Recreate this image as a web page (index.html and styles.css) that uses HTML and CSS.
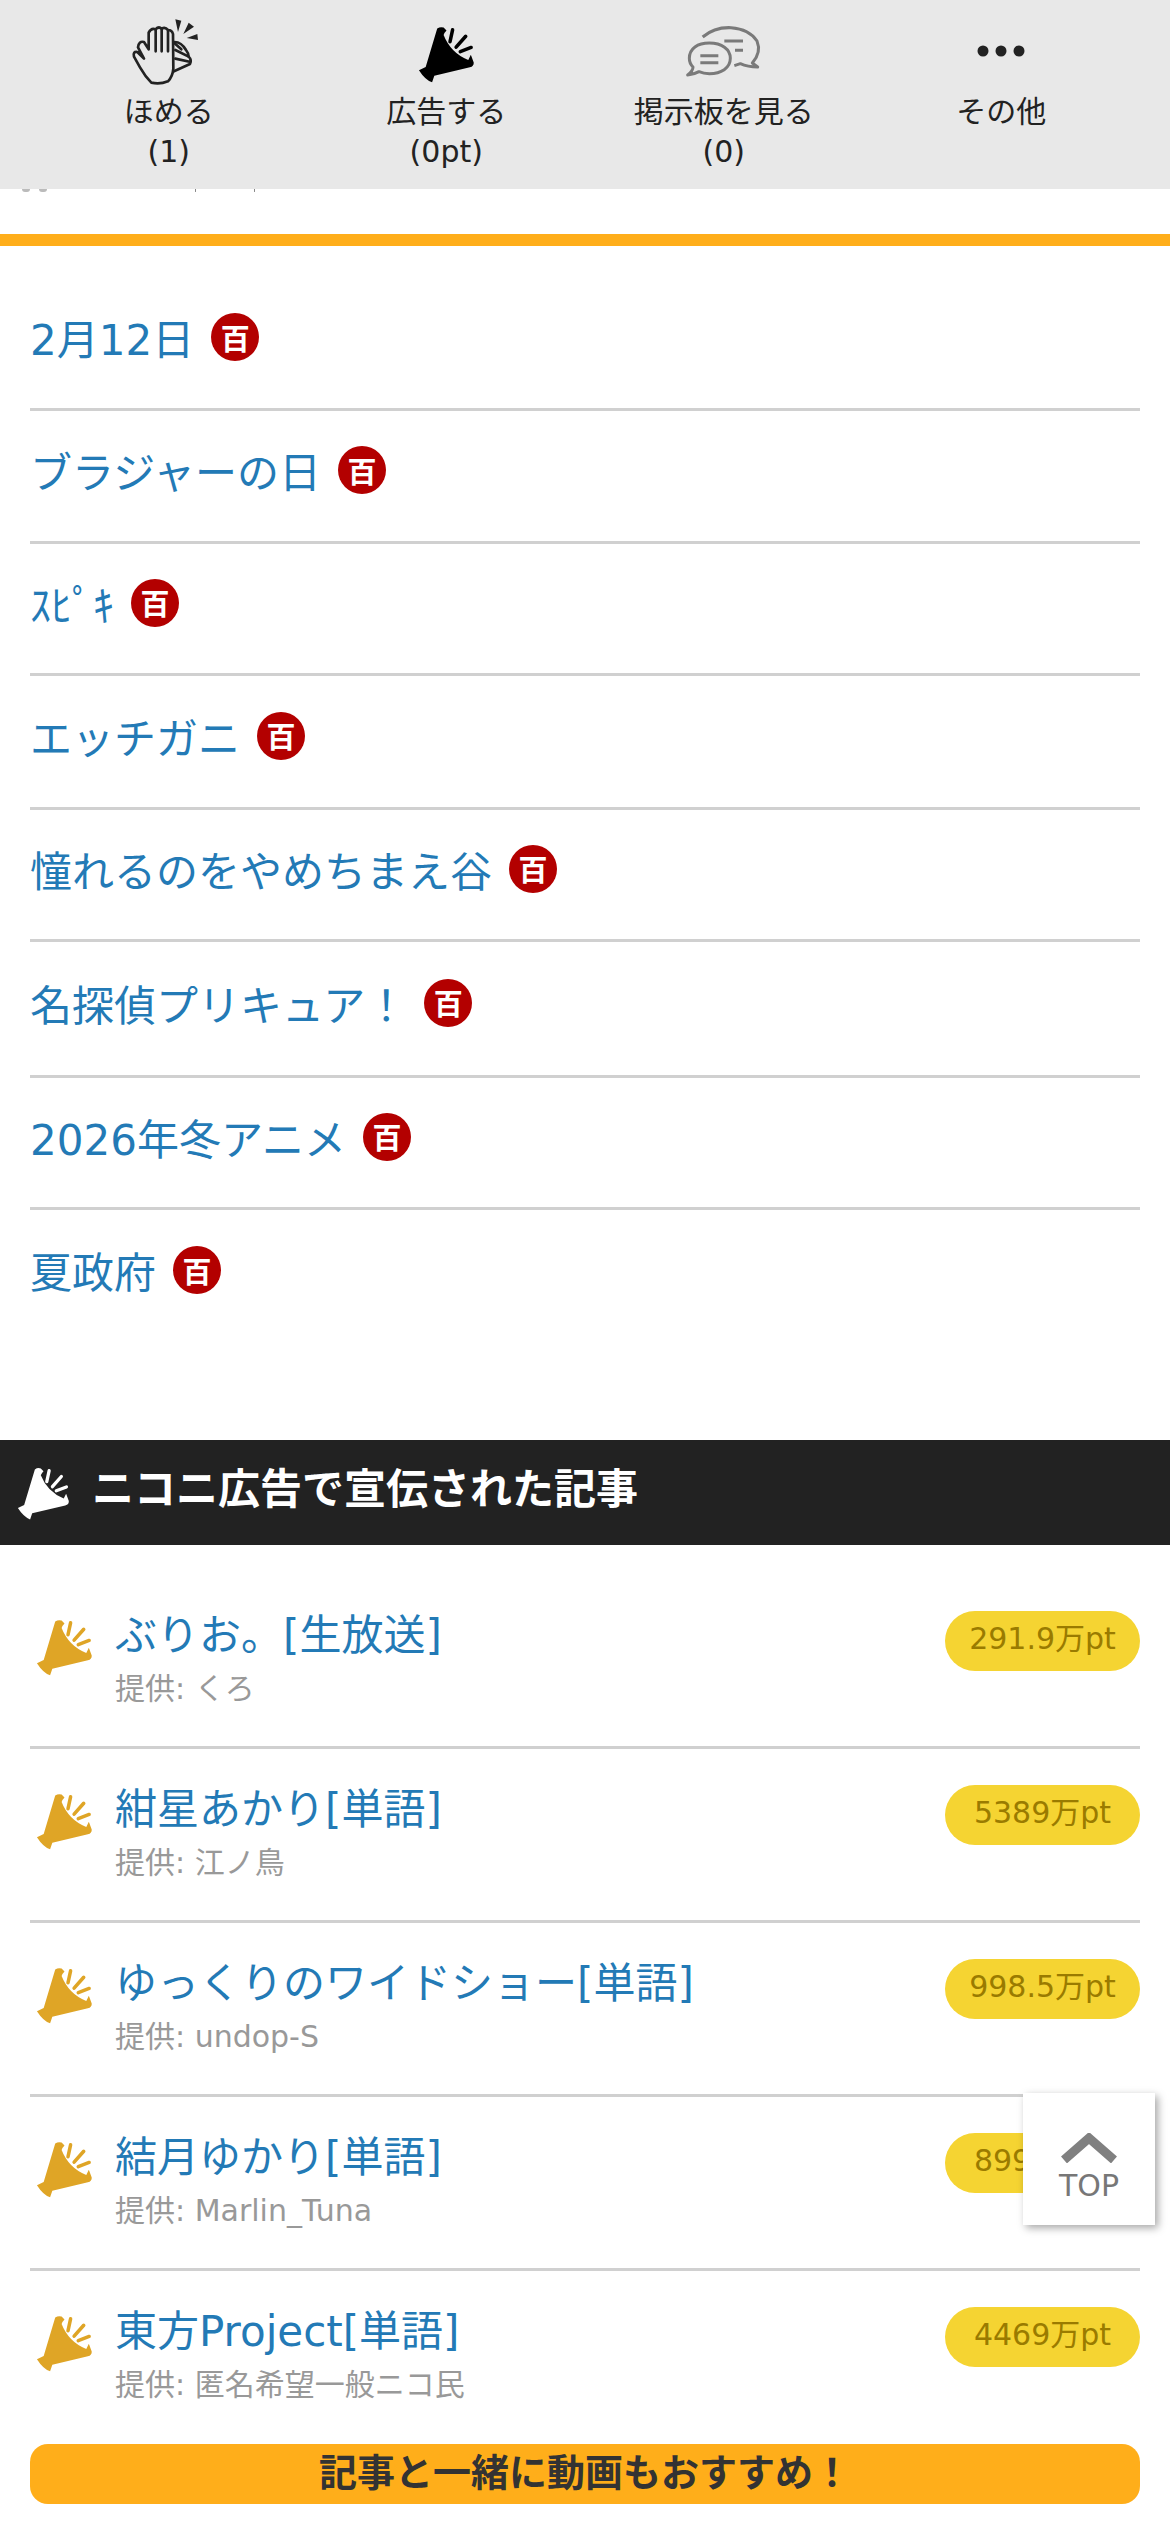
FILE: index.html
```html
<!DOCTYPE html>
<html lang="ja">
<head>
<meta charset="utf-8">
<title>ニコニ広告</title>
<link rel="stylesheet" href="styles.css">
</head>
<body>
<svg class="defs" width="0" height="0" aria-hidden="true">
  <symbol id="horn" viewBox="48 44 178 178">
    <path fill="currentColor" d="M108 52 Q118 45 128 49 L137 58 Q130 65 128 72 Q150 128 205 150 L213 134 L222 158 Q223 170 210 173 L99 199 L92 220 Q70 212 51 182 L72 172 Z"/>
    <path fill="none" stroke="currentColor" stroke-width="11" stroke-linecap="round" d="M156 56 L148 93 M197 76 L167 110 M214 111 L180 124"/>
  </symbol>
</svg>

<header class="toolbar">
  <div class="tool">
    <svg class="tool-icon" viewBox="3 0 300 240">
      <g fill="none" stroke="#222" stroke-width="8" stroke-linecap="round" stroke-linejoin="round">
        <path d="M168 98 L190 118 M172 120 L212 140 M172 146 L218 156 M168 184 L216 162 Q222 150 212 140"/>
        <path d="M170 96 Q190 96 204 120 Q212 130 212 140"/>
        <path d="M100 218 Q82 200 66 172 L48 140 Q44 124 58 126 L78 146 L60 112 Q62 92 78 96 L92 118 L92 68 Q100 52 113 58 Q122 48 131 56 Q142 50 150 60 Q162 60 165 72 L166 176 Q164 200 150 214 Q125 224 100 218 Z"/>
        <path d="M113 58 L113 124 M131 56 L131 124 M150 60 L150 124"/>
      </g>
      <path fill="#222" d="M172 28 L190 32 L180 66 Z M212 38 L228 50 L196 72 Z M238 72 L240 90 L206 84 Z"/>
    </svg>
    <div class="tool-label">ほめる<br>(1)</div>
  </div>
  <div class="tool">
    <svg class="tool-icon tool-horn" viewBox="0 0 100 80"><use href="#horn" x="22" y="16" width="57" height="57"/></svg>
    <div class="tool-label">広告する<br>(0pt)</div>
  </div>
  <div class="tool">
    <svg class="tool-icon" viewBox="-21 -15 300 240">
      <g fill="none" stroke="#7a7a7a" stroke-width="9" stroke-linejoin="round">
        <path d="M65 66 Q100 36 150 38 Q205 42 228 78 Q242 112 214 144 L230 156 Q200 156 178 146 L160 152"/>
        <path d="M25 130 C25 100 50 84 85 84 C122 84 148 102 148 130 C148 160 120 176 85 176 Q68 176 54 170 Q40 178 20 180 Q36 168 36 156 Q25 146 25 130 Z"/>
        <path d="M58 122 H112 M58 143 H112 M130 78 H186 M162 106 H186"/>
      </g>
    </svg>
    <div class="tool-label">掲示板を見る<br>(0)</div>
  </div>
  <div class="tool">
    <svg class="tool-icon" viewBox="0 0 100 80">
      <g fill="#222"><circle cx="32" cy="41" r="5.5"/><circle cx="50" cy="41" r="5.5"/><circle cx="68" cy="41" r="5.5"/></g>
    </svg>
    <div class="tool-label">その他</div>
  </div>
</header>

<div class="scroll-rest" aria-hidden="true"><i class="mark mark-a"></i><i class="mark mark-b"></i><i class="mark mark-c"></i><i class="mark mark-d"></i></div>

<section class="words">
  <div class="word word-m"><a class="word-link">2月12日</a><span class="dic">百</span></div>
  <div class="word word-m"><a class="word-link">ブラジャーの日</a><span class="dic">百</span></div>
  <div class="word"><a class="word-link">ｽﾋﾟｷ</a><span class="dic">百</span></div>
  <div class="word word-tall"><a class="word-link">エッチガニ</a><span class="dic">百</span></div>
  <div class="word"><a class="word-link">憧れるのをやめちまえ谷</a><span class="dic">百</span></div>
  <div class="word word-taller"><a class="word-link">名探偵プリキュア！</a><span class="dic">百</span></div>
  <div class="word"><a class="word-link">2026年冬アニメ</a><span class="dic">百</span></div>
  <div class="word word-last"><a class="word-link">夏政府</a><span class="dic">百</span></div>
</section>

<h2 class="ad-head">
  <svg class="ad-head-icon"><use href="#horn"/></svg>
  <span class="ad-head-text">ニコニ広告で宣伝された記事</span>
</h2>

<section class="ads">
  <div class="ad">
    <svg class="ad-icon"><use href="#horn"/></svg>
    <div class="ad-body"><a class="ad-title">ぶりお。[生放送]</a><div class="ad-by">提供: くろ</div></div>
    <div class="pill">291.9万pt</div>
  </div>
  <div class="ad">
    <svg class="ad-icon"><use href="#horn"/></svg>
    <div class="ad-body"><a class="ad-title">紺星あかり[単語]</a><div class="ad-by">提供: 江ノ鳥</div></div>
    <div class="pill">5389万pt</div>
  </div>
  <div class="ad">
    <svg class="ad-icon"><use href="#horn"/></svg>
    <div class="ad-body"><a class="ad-title">ゆっくりのワイドショー[単語]</a><div class="ad-by">提供: undop-S</div></div>
    <div class="pill">998.5万pt</div>
  </div>
  <div class="ad">
    <svg class="ad-icon"><use href="#horn"/></svg>
    <div class="ad-body"><a class="ad-title">結月ゆかり[単語]</a><div class="ad-by">提供: Marlin_Tuna</div></div>
    <div class="pill">8990万pt</div>
  </div>
  <div class="ad ad-last">
    <svg class="ad-icon"><use href="#horn"/></svg>
    <div class="ad-body"><a class="ad-title">東方Project[単語]</a><div class="ad-by">提供: 匿名希望一般ニコ民</div></div>
    <div class="pill">4469万pt</div>
  </div>
  <div class="banner">記事と一緒に動画もおすすめ！</div>
</section>

<a class="to-top">
  <svg class="to-top-icon" viewBox="0 0 56 30"><path d="M3 27 L28 5 L53 27" fill="none" stroke="#808080" stroke-width="9"/></svg>
  <span>TOP</span>
</a>
</body>
</html>
```

FILE: styles.css
```css
* { box-sizing: border-box; }
html, body { margin: 0; padding: 0; }
body {
  position: relative;
  height: 2532px;
  overflow: hidden;
  background: #fff;
  font-family: "DejaVu Sans", "Noto Sans CJK JP", sans-serif;
  color: #222;
}
.defs { position: absolute; }

.toolbar {
  display: flex;
  height: 189px;
  padding: 0 30px;
  background: #e8e8e8;
}
.tool {
  flex: 1 1 0;
  padding-top: 10px;
  text-align: center;
}
.tool-icon {
  display: block;
  width: 100px;
  height: 80px;
  margin: 0 auto;
}
.tool-horn { color: #000; }
.tool-label {
  margin-top: 2px;
  font-size: 30px;
  line-height: 40px;
  color: #222;
}

.scroll-rest {
  display: flex;
  height: 45px;
  position: relative;
}
.mark { display: block; height: 3px; background: #bbb; border-radius: 0 0 3px 3px; }
.mark-a { width: 8px; margin-left: 22px; }
.mark-b { width: 8px; margin-left: 9px; }
.mark-c { width: 1px; margin-left: 148px; background: #888; }
.mark-d { width: 1px; margin-left: 58px; background: #888; }

.words {
  border-top: 12px solid #ffae1a;
  padding: 32px 30px 0;
  height: 1206px;
}
.word {
  display: flex;
  align-items: center;
  gap: 17px;
  height: 132px;
  border-bottom: 3px solid #d0d0d0;
  padding-bottom: 4px;
}
.word-m { height: 133px; }
.word-tall { height: 134px; }
.word-taller { height: 136px; }
.word-last { border-bottom: 0; }
.word-link {
  font-size: 42px;
  line-height: 56px;
  color: #237ab6;
}
.dic {
  display: flex;
  align-items: center;
  justify-content: center;
  width: 48px;
  height: 48px;
  margin-bottom: 8px;
  border-radius: 50%;
  background: #b30000;
  color: #fff;
  font-family: "Noto Sans CJK JP", sans-serif;
  font-size: 29px;
  font-weight: 700;
  line-height: 1;
}

.ad-head {
  display: flex;
  align-items: center;
  gap: 22px;
  height: 105px;
  margin: 0;
  padding: 0 0 0 17px;
  background: #222;
  color: #fff;
  font-size: 42px;
  font-weight: 700;
}
.ad-head-icon { width: 53px; height: 53px; margin-top: 2px; color: #fff; flex: none; }
.ad-head-text { margin-bottom: 14px; }

.ads { padding: 30px 30px 0; }
.ad {
  display: flex;
  align-items: flex-start;
  height: 174px;
  padding-top: 35px;
  border-bottom: 3px solid #d0d0d0;
}
.ad-last { height: 173px; border-bottom: 0; }
.ad-icon {
  flex: none;
  width: 57px;
  height: 57px;
  margin: 9px 22px 0 6px;
  color: #dfa526;
}
.ad-body { flex: 1 1 auto; min-width: 0; }
.ad-title {
  display: block;
  font-size: 42px;
  line-height: 52px;
  color: #237ab6;
}
.ad-by {
  margin-top: 7px;
  font-size: 30px;
  line-height: 40px;
  color: #999;
}
.pill {
  flex: none;
  width: 195px;
  height: 60px;
  margin-top: 1px;
  border-radius: 30px;
  background: #f5d432;
  color: #9a7b00;
  font-size: 30px;
  line-height: 56px;
  text-align: center;
}
.banner {
  height: 60px;
  border-radius: 18px;
  background: #ffae1a;
  color: #333;
  font-size: 38px;
  font-weight: 700;
  line-height: 58px;
  text-align: center;
}

.to-top {
  position: absolute;
  left: 1023px;
  top: 2093px;
  width: 132px;
  height: 132px;
  padding-top: 40px;
  background: #fff;
  box-shadow: 3px 3px 8px rgba(0, 0, 0, .35);
  color: #777;
  font-size: 30px;
  line-height: 38px;
  text-align: center;
}
.to-top-icon { display: block; width: 56px; height: 30px; margin: 0 auto 4px; }
```
